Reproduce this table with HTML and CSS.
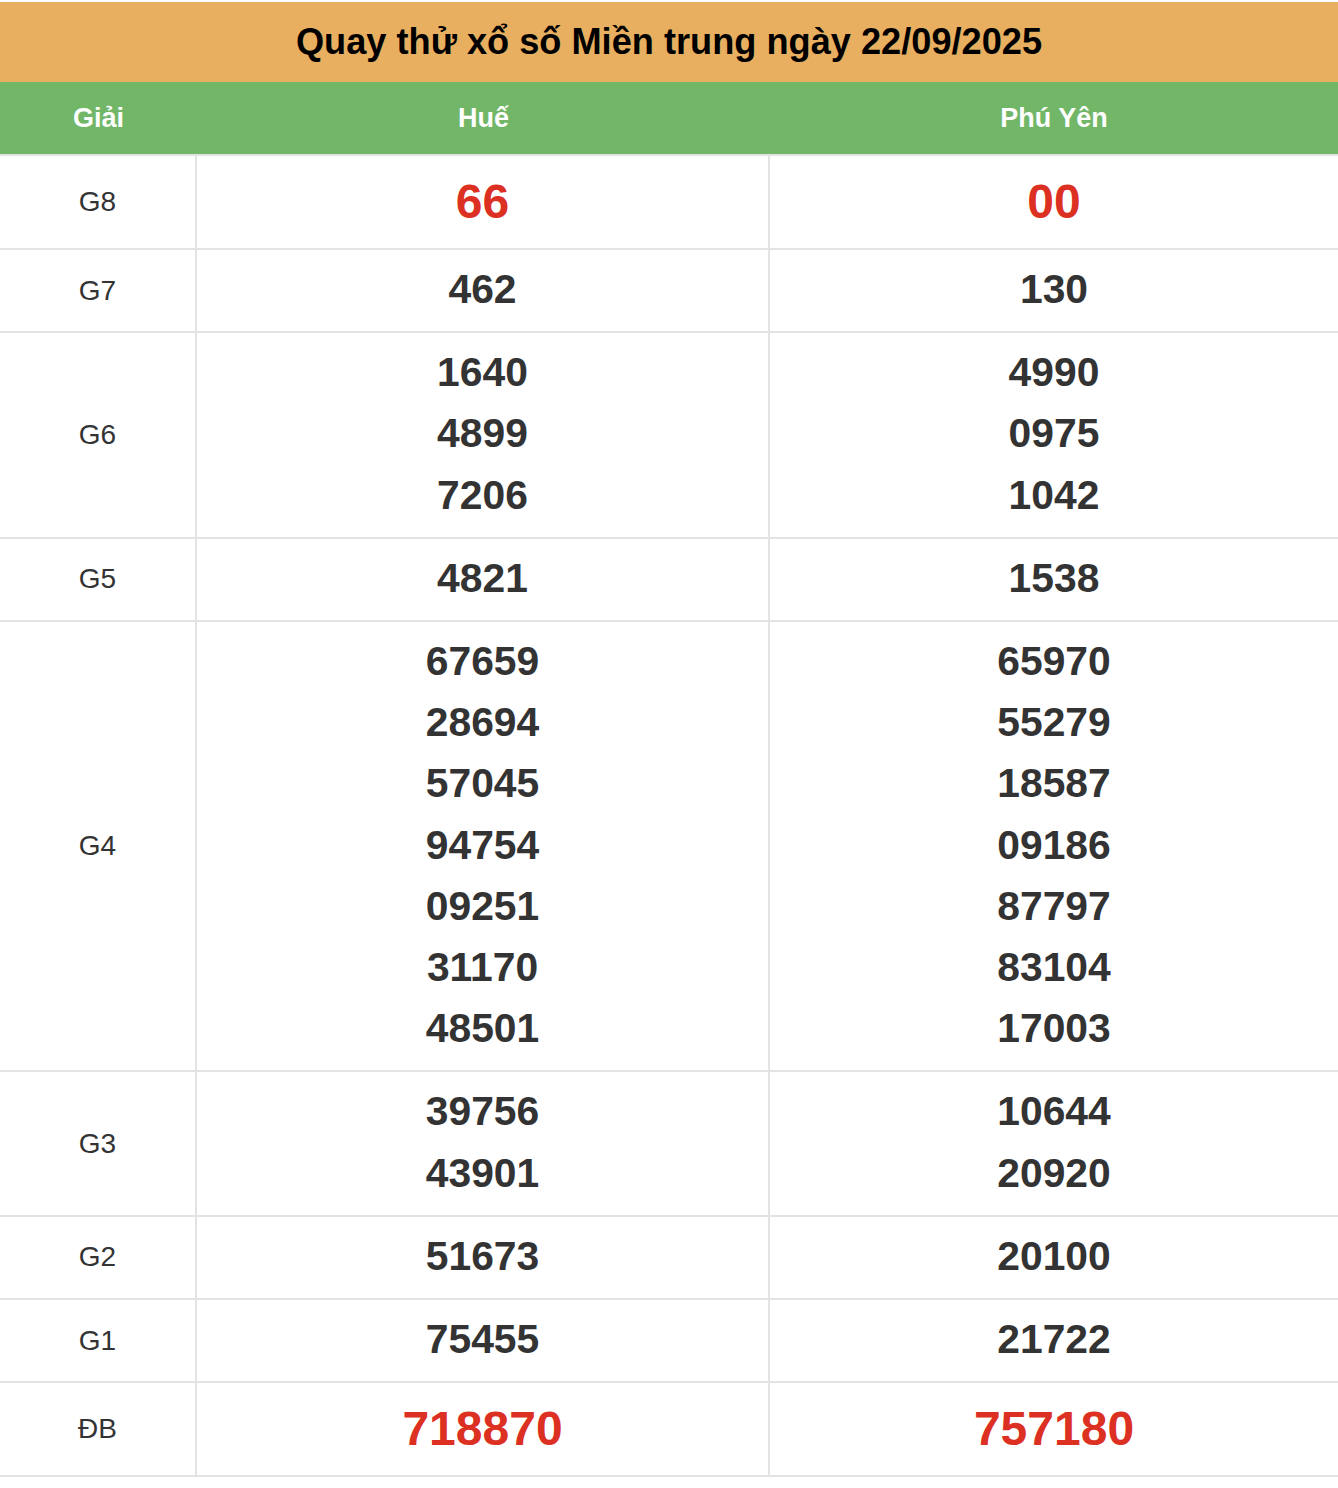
FILE: index.html
```html
<!DOCTYPE html>
<html lang="vi">
<head>
<meta charset="utf-8">
<title>Quay thử xổ số Miền trung</title>
<link rel="stylesheet" href="styles.css">
</head>
<body>
<div class="board">
  <div class="title">Quay thử xổ số Miền trung ngày 22/09/2025</div>
  <div class="row head">
    <div class="cell">Giải</div>
    <div class="cell">Huế</div>
    <div class="cell">Phú Yên</div>
  </div>
  <div class="row">
    <div class="cell label">G8</div>
    <div class="cell nums big"><div>66</div></div>
    <div class="cell nums big"><div>00</div></div>
  </div>
  <div class="row">
    <div class="cell label">G7</div>
    <div class="cell nums"><div>462</div></div>
    <div class="cell nums"><div>130</div></div>
  </div>
  <div class="row">
    <div class="cell label">G6</div>
    <div class="cell nums"><div>1640</div><div>4899</div><div>7206</div></div>
    <div class="cell nums"><div>4990</div><div>0975</div><div>1042</div></div>
  </div>
  <div class="row">
    <div class="cell label">G5</div>
    <div class="cell nums"><div>4821</div></div>
    <div class="cell nums"><div>1538</div></div>
  </div>
  <div class="row">
    <div class="cell label">G4</div>
    <div class="cell nums"><div>67659</div><div>28694</div><div>57045</div><div>94754</div><div>09251</div><div>31170</div><div>48501</div></div>
    <div class="cell nums"><div>65970</div><div>55279</div><div>18587</div><div>09186</div><div>87797</div><div>83104</div><div>17003</div></div>
  </div>
  <div class="row">
    <div class="cell label">G3</div>
    <div class="cell nums"><div>39756</div><div>43901</div></div>
    <div class="cell nums"><div>10644</div><div>20920</div></div>
  </div>
  <div class="row">
    <div class="cell label">G2</div>
    <div class="cell nums"><div>51673</div></div>
    <div class="cell nums"><div>20100</div></div>
  </div>
  <div class="row">
    <div class="cell label">G1</div>
    <div class="cell nums"><div>75455</div></div>
    <div class="cell nums"><div>21722</div></div>
  </div>
  <div class="row">
    <div class="cell label">ĐB</div>
    <div class="cell nums big"><div>718870</div></div>
    <div class="cell nums big"><div>757180</div></div>
  </div>
</div>
</body>
</html>
```

FILE: styles.css
```css
html, body {
  margin: 0;
  padding: 0;
  background: #fff;
}
body {
  font-family: "Liberation Sans", Arial, Helvetica, sans-serif;
  color: #333;
  padding-top: 2px;
}
.board {
  width: 1338px;
}
.title {
  background: #e7af5f;
  color: #000;
  font-weight: bold;
  font-size: 36.2px;
  line-height: 54px;
  padding: 13px 0;
  text-align: center;
}
.row {
  display: grid;
  grid-template-columns: 197px 573px 1fr;
  border-bottom: 2px solid #e3e3e3;
}
.cell {
  display: flex;
  flex-direction: column;
  align-items: center;
  justify-content: center;
  text-align: center;
}
.row .cell:nth-child(1),
.row .cell:nth-child(2) {
  border-right: 2px solid #e3e3e3;
}
.head {
  background: #72b668;
  color: #fff;
  font-weight: bold;
  font-size: 27px;
  height: 72px;
}
.head .cell {
  border-right: none !important;
}
.label {
  font-size: 28px;
  color: #333;
}
.nums {
  padding: 9px 0 11px;
  font-weight: bold;
  font-size: 40.8px;
  line-height: 61.2px;
  color: #333;
}
.nums.big {
  padding: 10px 0;
  font-size: 48px;
  line-height: 72px;
  color: #dc3023;
}
```
